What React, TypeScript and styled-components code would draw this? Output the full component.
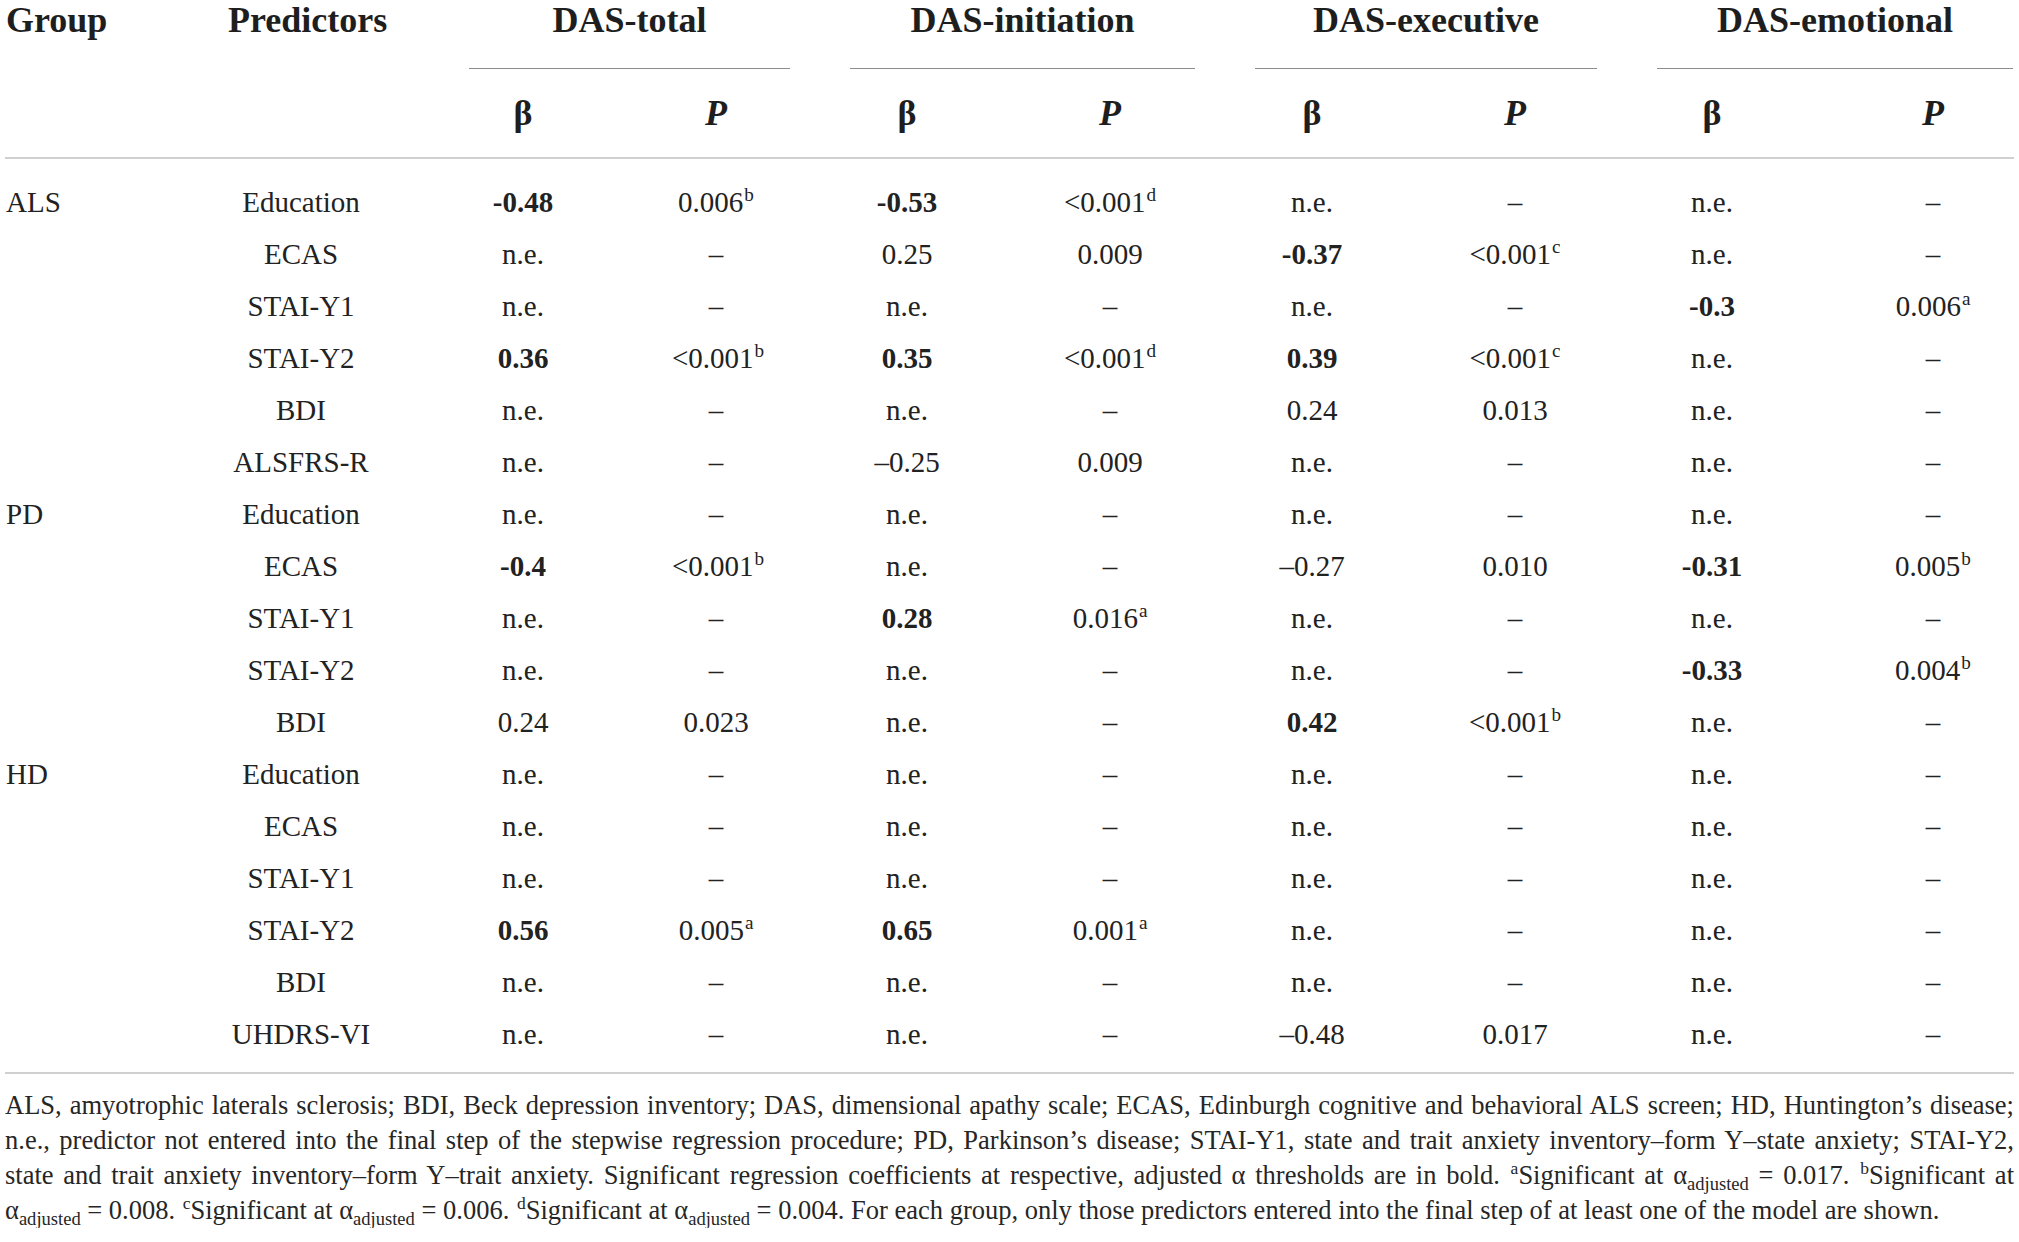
import styled, { createGlobalStyle } from 'styled-components';

const GlobalStyle = createGlobalStyle`
  html, body {
    margin: 0;
    padding: 0;
    background: #ffffff;
  }
  body {
    font-family: 'Liberation Serif', 'Times New Roman', serif;
    color: #222222;
  }
`;

// column widths chosen so that every cell centre lands on the reference
const COLUMNS = '223px 146px 298px 88px 294px 112px 292px 114px 280px 162px';

const Page = styled.div`
  width: 2009px;
  padding: 0 5px;
`;

const TopRow = styled.div`
  display: grid;
  grid-template-columns: 223px 146px 1fr;
`;

const HeadCell = styled.div<{ $align?: 'left' | 'center' }>`
  font-size: 36px;
  font-weight: 700;
  line-height: 40px;
  color: #1e1e1e;
  text-align: ${(p) => p.$align ?? 'center'};
  padding-left: ${(p) => (p.$align === 'left' ? '1px' : '0')};
  white-space: nowrap;
`;

const GroupHeads = styled.div`
  display: grid;
  grid-template-columns: 321px 345px 342px 356px;
  column-gap: 60px;
  padding-left: 95px;
`;

const GroupHead = styled.div`
  font-size: 36px;
  font-weight: 700;
  line-height: 40px;
  color: #1e1e1e;
  text-align: center;
  padding-bottom: 28px;
  border-bottom: 1px solid #8c8c8c;
  white-space: nowrap;
`;

const SubRow = styled.div`
  display: grid;
  grid-template-columns: ${COLUMNS};
  padding: 24px 0;
  border-bottom: 2px solid #d0d0d0;
`;

const SubHead = styled.div<{ $italic?: boolean }>`
  font-size: 36px;
  font-weight: 700;
  font-style: ${(p) => (p.$italic ? 'italic' : 'normal')};
  line-height: 40px;
  color: #1e1e1e;
  text-align: center;
`;

const Body = styled.div`
  padding: 17px 0 12px;
  border-bottom: 2px solid #d0d0d0;
`;

const Row = styled.div`
  display: grid;
  grid-template-columns: ${COLUMNS};
  height: 52px;
`;

const Cell = styled.div<{ $bold?: boolean; $left?: boolean }>`
  font-size: 29px;
  line-height: 52px;
  font-weight: ${(p) => (p.$bold ? 700 : 400)};
  text-align: ${(p) => (p.$left ? 'left' : 'center')};
  padding-left: ${(p) => (p.$left ? '1px' : '0')};
  white-space: nowrap;
`;

const Sup = styled.sup`
  font-size: 66%;
  line-height: 0;
  vertical-align: 0.55em;
  margin-left: 1px;
`;

const Sub = styled.sub`
  font-size: 70%;
  line-height: 0;
  vertical-align: -0.3em;
`;

const Footnote = styled.div`
  padding-top: 14px;
  font-size: 26.5px;
  line-height: 35px;
  color: #262626;
`;

const FootLine = styled.div<{ $last?: boolean }>`
  text-align: justify;
  text-align-last: ${(p) => (p.$last ? 'left' : 'justify')};
`;

type Line = [string, string, string[]];

const rows: Line[] = [
  ['ALS', 'Education', ['*-0.48', '0.006^b', '*-0.53', '<0.001^d', 'n.e.', '–', 'n.e.', '–']],
  ['', 'ECAS', ['n.e.', '–', '0.25', '0.009', '*-0.37', '<0.001^c', 'n.e.', '–']],
  ['', 'STAI-Y1', ['n.e.', '–', 'n.e.', '–', 'n.e.', '–', '*-0.3', '0.006^a']],
  ['', 'STAI-Y2', ['*0.36', '<0.001^b', '*0.35', '<0.001^d', '*0.39', '<0.001^c', 'n.e.', '–']],
  ['', 'BDI', ['n.e.', '–', 'n.e.', '–', '0.24', '0.013', 'n.e.', '–']],
  ['', 'ALSFRS-R', ['n.e.', '–', '–0.25', '0.009', 'n.e.', '–', 'n.e.', '–']],
  ['PD', 'Education', ['n.e.', '–', 'n.e.', '–', 'n.e.', '–', 'n.e.', '–']],
  ['', 'ECAS', ['*-0.4', '<0.001^b', 'n.e.', '–', '–0.27', '0.010', '*-0.31', '0.005^b']],
  ['', 'STAI-Y1', ['n.e.', '–', '*0.28', '0.016^a', 'n.e.', '–', 'n.e.', '–']],
  ['', 'STAI-Y2', ['n.e.', '–', 'n.e.', '–', 'n.e.', '–', '*-0.33', '0.004^b']],
  ['', 'BDI', ['0.24', '0.023', 'n.e.', '–', '*0.42', '<0.001^b', 'n.e.', '–']],
  ['HD', 'Education', ['n.e.', '–', 'n.e.', '–', 'n.e.', '–', 'n.e.', '–']],
  ['', 'ECAS', ['n.e.', '–', 'n.e.', '–', 'n.e.', '–', 'n.e.', '–']],
  ['', 'STAI-Y1', ['n.e.', '–', 'n.e.', '–', 'n.e.', '–', 'n.e.', '–']],
  ['', 'STAI-Y2', ['*0.56', '0.005^a', '*0.65', '0.001^a', 'n.e.', '–', 'n.e.', '–']],
  ['', 'BDI', ['n.e.', '–', 'n.e.', '–', 'n.e.', '–', 'n.e.', '–']],
  ['', 'UHDRS-VI', ['n.e.', '–', 'n.e.', '–', '–0.48', '0.017', 'n.e.', '–']],
];

const groups = ['DAS-total', 'DAS-initiation', 'DAS-executive', 'DAS-emotional'];

const Value = ({ raw }: { raw: string }) => {
  const bold = raw.startsWith('*');
  const [text, mark] = raw.replace('*', '').split('^');
  return (
    <Cell $bold={bold}>
      {text}
      {mark && <Sup>{mark}</Sup>}
    </Cell>
  );
};

const Alpha = () => (
  <>
    α<Sub>adjusted</Sub>
  </>
);

const App = () => (
  <Page>
    <GlobalStyle />
    <TopRow>
      <HeadCell $align="left">Group</HeadCell>
      <HeadCell>Predictors</HeadCell>
      <GroupHeads>
        {groups.map((g) => (
          <GroupHead key={g}>{g}</GroupHead>
        ))}
      </GroupHeads>
    </TopRow>
    <SubRow>
      <div />
      <div />
      {groups.map((g) => [
        <SubHead key={g + 'b'}>β</SubHead>,
        <SubHead key={g + 'p'} $italic>
          P
        </SubHead>,
      ])}
    </SubRow>
    <Body>
      {rows.map(([group, pred, vals], i) => (
        <Row key={i}>
          <Cell $left>{group}</Cell>
          <Cell>{pred}</Cell>
          {vals.map((v, j) => (
            <Value key={j} raw={v} />
          ))}
        </Row>
      ))}
    </Body>
    <Footnote>
      <FootLine>
        ALS, amyotrophic laterals sclerosis; BDI, Beck depression inventory; DAS, dimensional apathy
        scale; ECAS, Edinburgh cognitive and behavioral ALS screen; HD, Huntington’s disease;
      </FootLine>
      <FootLine>
        n.e., predictor not entered into the final step of the stepwise regression procedure; PD,
        Parkinson’s disease; STAI-Y1, state and trait anxiety inventory–form Y–state anxiety; STAI-Y2,
      </FootLine>
      <FootLine>
        state and trait anxiety inventory–form Y–trait anxiety. Significant regression coefficients at
        respective, adjusted α thresholds are in bold. <Sup>a</Sup>Significant at <Alpha /> = 0.017.{' '}
        <Sup>b</Sup>Significant at
      </FootLine>
      <FootLine $last>
        <Alpha /> = 0.008. <Sup>c</Sup>Significant at <Alpha /> = 0.006. <Sup>d</Sup>Significant at{' '}
        <Alpha /> = 0.004. For each group, only those predictors entered into the final step of at least
        one of the model are shown.
      </FootLine>
    </Footnote>
  </Page>
);

export default App;
